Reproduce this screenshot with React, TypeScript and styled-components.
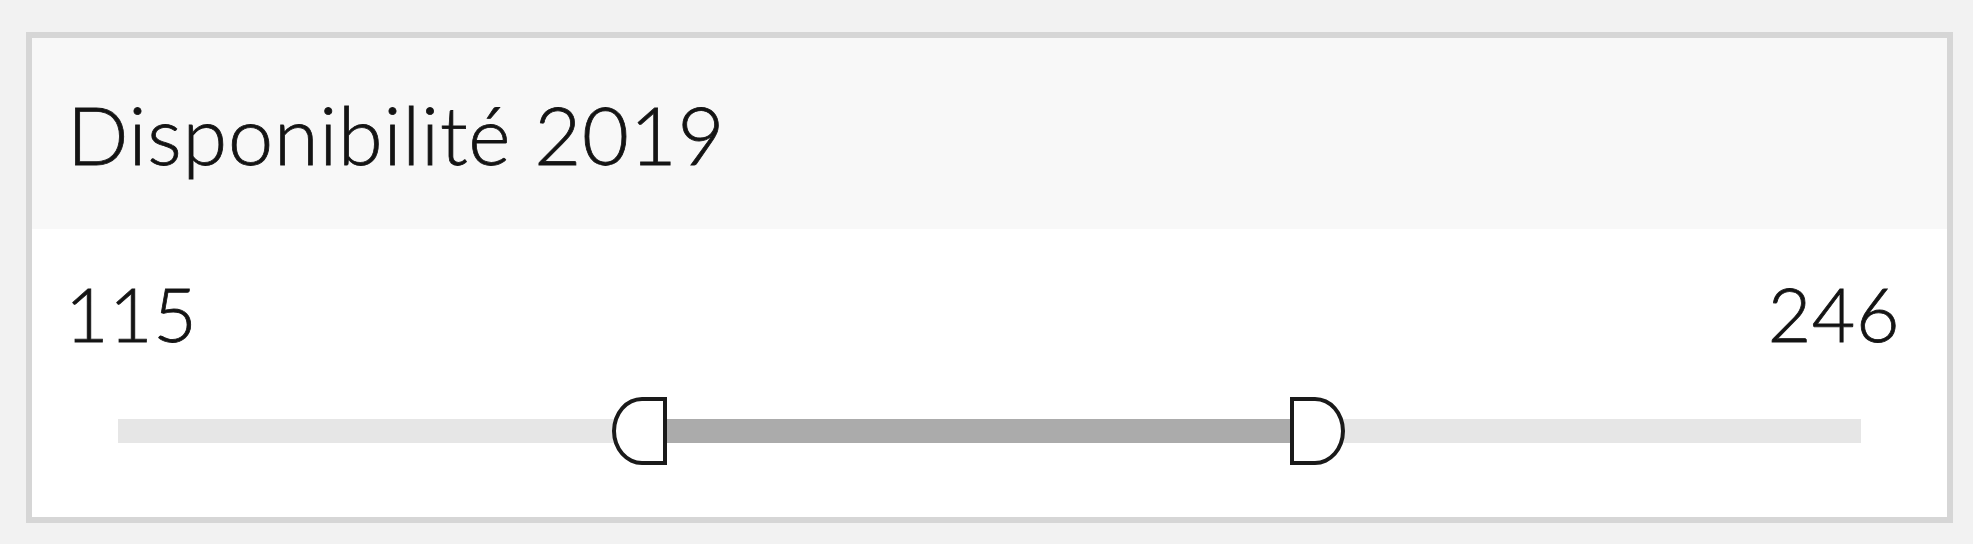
import React from "react";
import styled, { createGlobalStyle } from "styled-components";

const Global = createGlobalStyle`
  html, body {
    margin: 0;
    padding: 0;
    background: #f2f2f2;
  }
  #root {
    width: 1973px;
    height: 544px;
  }
`;

const Page = styled.div`
  box-sizing: border-box;
  width: 1973px;
  height: 544px;
  padding: 32px 20px 21px 26px;
  font-family: Lato, "Open Sans", sans-serif;
  color: #141414;
`;

const Card = styled.section`
  box-sizing: border-box;
  height: 100%;
  border: 6px solid #d6d6d6;
  background: #ffffff;
  display: flex;
  flex-direction: column;
`;

const Header = styled.header`
  height: 191px;
  background: #f8f8f8;
  display: flex;
  align-items: center;
  padding-left: 35px;
`;

const Title = styled.h1`
  margin: 0;
  font-size: 81px;
  font-weight: 300;
  line-height: 1;
  letter-spacing: 0.8px;
  -webkit-text-stroke: 0.8px #141414;
`;

const Body = styled.div`
  flex: 1;
  display: flex;
  flex-direction: column;
  padding: 47px 47px 0 33px;
`;

const Values = styled.div`
  display: flex;
  justify-content: space-between;
  align-items: baseline;
`;

const Value = styled.span`
  font-size: 75px;
  font-weight: 300;
  line-height: 1;
  letter-spacing: 0.6px;
  -webkit-text-stroke: 0.8px #141414;
`;

const SliderWrap = styled.div`
  position: relative;
  margin: 68px 39px 0 53px;
  height: 24px;
`;

const Track = styled.div`
  height: 24px;
  background: #e6e6e6;
`;

const Range = styled.div`
  position: absolute;
  top: 0;
  height: 24px;
  background: #ababab;
`;

const Handle = styled.div<{ $side: "low" | "high" }>`
  position: absolute;
  top: 50%;
  box-sizing: border-box;
  width: 55px;
  height: 68px;
  margin-top: -34px;
  background: #ffffff;
  border: 4.5px solid #1a1a1a;
  border-radius: ${(p) =>
    p.$side === "low"
      ? "30px 0 0 30px / 34px 0 0 34px"
      : "0 30px 30px 0 / 0 34px 34px 0"};
`;

const MIN = 115;
const MAX = 246;
const LOW = 156.25;
const HIGH = 203.1;

export default function App() {
  const lowPct = ((LOW - MIN) / (MAX - MIN)) * 100;
  const highPct = ((HIGH - MIN) / (MAX - MIN)) * 100;
  return (
    <>
      <Global />
      <Page>
        <Card>
          <Header>
            <Title>Disponibilité 2019</Title>
          </Header>
          <Body>
            <Values>
              <Value>{MIN}</Value>
              <Value>{MAX}</Value>
            </Values>
            <SliderWrap>
              <Track />
              <Range style={{ left: `${lowPct}%`, width: `${highPct - lowPct}%` }} />
              <Handle $side="low" style={{ left: `calc(${lowPct}% - 55px)` }} />
              <Handle $side="high" style={{ left: `${highPct}%` }} />
            </SliderWrap>
          </Body>
        </Card>
      </Page>
    </>
  );
}
